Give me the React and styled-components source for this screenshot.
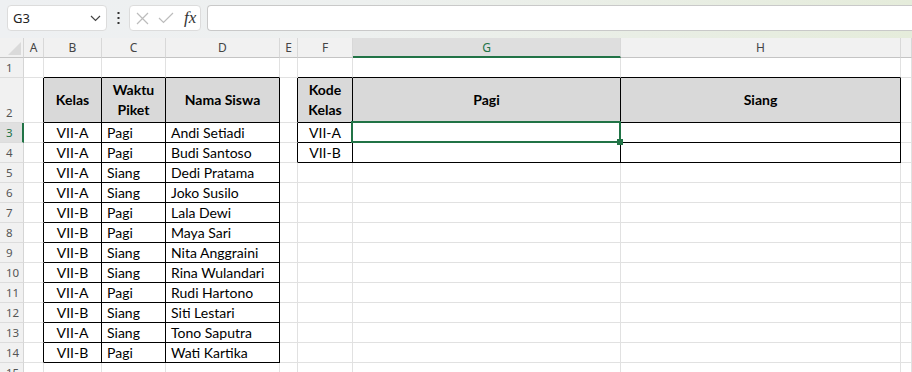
import styled, { createGlobalStyle } from "styled-components"

const GlobalStyle = createGlobalStyle`
* {
    box-sizing: border-box;
}
html, body {
    margin: 0;
    background: #fff;
    overflow: hidden;
}
body {
    font-family: "Lato", "Liberation Sans", sans-serif;
}
`

const GREEN = "#217346"
const GRID = "#e1e1e1"

// column I is only a sliver at the right edge, so its letter is off screen
const COLS = [
    { key: "A", w: 20 },
    { key: "B", w: 58 },
    { key: "C", w: 64 },
    { key: "D", w: 114 },
    { key: "E", w: 18 },
    { key: "F", w: 55 },
    { key: "G", w: 268 },
    { key: "H", w: 280 },
    { key: "I", w: 0, hidden: true },
]

const TABLES = [
    { c1: 1, c2: 3, r1: 2, r2: 14 },
    { c1: 5, c2: 7, r1: 2, r2: 4 },
]

const siswa = [
    ["VII-A", "Pagi", "Andi Setiadi"],
    ["VII-A", "Pagi", "Budi Santoso"],
    ["VII-A", "Siang", "Dedi Pratama"],
    ["VII-A", "Siang", "Joko Susilo"],
    ["VII-B", "Pagi", "Lala Dewi"],
    ["VII-B", "Pagi", "Maya Sari"],
    ["VII-B", "Siang", "Nita Anggraini"],
    ["VII-B", "Siang", "Rina Wulandari"],
    ["VII-A", "Pagi", "Rudi Hartono"],
    ["VII-B", "Siang", "Siti Lestari"],
    ["VII-A", "Siang", "Tono Saputra"],
    ["VII-B", "Pagi", "Wati Kartika"],
]

// build the cell contents
const cells = {}
const put = (r, key, text, opts = {}) => {
    cells[`${r}${key}`] = { text, ...opts }
}
const head = { bold: true, align: "center", fill: "#d9d9d9" }
put(2, "B", "Kelas", head)
put(2, "C", "Waktu Piket", head)
put(2, "D", "Nama Siswa", head)
put(2, "F", "Kode Kelas", head)
put(2, "G", "Pagi", head)
put(2, "H", "Siang", head)
siswa.forEach((s, i) => {
    put(i + 3, "B", s[0], { align: "center" })
    put(i + 3, "C", s[1])
    put(i + 3, "D", s[2])
})
put(3, "F", "VII-A", { align: "center" })
put(4, "F", "VII-B", { align: "center" })

const inTable = (r, c) => TABLES.some((t) => r >= t.r1 && r <= t.r2 && c >= t.c1 && c <= t.c2)

const ROWS = [
    { n: 1, h: 20 },
    { n: 2, h: 45 },
    ...Array.from({ length: 12 }, (_, i) => ({ n: i + 3, h: 20 })),
    { n: 15, h: 20 },
]

const Page = styled.div`
    width: 912px;
    height: 372px;
    overflow: hidden;
    display: flex;
    flex-direction: column;
`
const Toolbar = styled.div`
    flex: 0 0 38px;
    display: flex;
    align-items: flex-start;
    padding: 5px 0 0 7px;
    background: linear-gradient(90deg, #eef0f2 0%, #edf0ef 40%, #e5ecdb 100%);
    font-family: "Noto Sans", "Open Sans", sans-serif;
`
const NameBox = styled.div`
    width: 100px;
    height: 26px;
    background: #fff;
    border: 1px solid #dcdcdc;
    border-radius: 4px;
    display: flex;
    align-items: center;
    justify-content: space-between;
    padding: 0 5px 0 5px;
    font-size: 13px;
    color: #222;
`
const Dots = styled.div`
    width: 22px;
    height: 26px;
    display: flex;
    align-items: center;
    justify-content: center;
`
const FxGroup = styled.div`
    width: 72px;
    height: 26px;
    background: #fff;
    border: 1px solid #dcdcdc;
    border-radius: 4px;
    display: flex;
    align-items: center;
    padding: 0 0 0 6px;
    gap: 9px;
`
const Fx = styled.span`
    font-family: "Liberation Serif", serif;
    font-style: italic;
    font-size: 17px;
    color: #333;
    margin-left: 1px;
`
const FormulaInput = styled.div`
    flex: 1;
    height: 26px;
    margin-left: 6px;
    background: #fff;
    border: 1px solid #c9c9c9;
    border-right: none;
    border-radius: 4px 0 0 4px;
`

const HeaderRow = styled.div`
    flex: 0 0 20px;
    display: flex;
    background: #f1f1f1;
`
const Corner = styled.div`
    flex: 0 0 24px;
    border-right: 1px solid #d5d5d5;
    border-bottom: 1px solid #c4c4c4;
    display: flex;
    align-items: flex-end;
    justify-content: flex-end;
    padding: 0 2px 2px 0;
`
const ColHead = styled.div`
    flex: ${(p) => (p.$w ? `0 0 ${p.$w}px` : "1 1 auto")};
    display: flex;
    align-items: center;
    justify-content: center;
    font-family: "Noto Sans", "Open Sans", sans-serif;
    font-size: 12px;
    color: ${(p) => (p.$sel ? GREEN : "#444")};
    background: ${(p) => (p.$sel ? "#dedede" : "transparent")};
    border-right: 1px solid #d8d8d8;
    border-bottom: ${(p) => (p.$sel ? `2px solid ${GREEN}` : "1px solid #c4c4c4")};
    padding-top: ${(p) => (p.$sel ? "1px" : "0")};
`
const Row = styled.div`
    flex: 0 0 ${(p) => p.$h}px;
    display: flex;
`
const RowHead = styled.div`
    flex: 0 0 24px;
    display: flex;
    align-items: flex-end;
    padding-left: 6px;
    font-family: "Noto Sans", "Open Sans", sans-serif;
    font-size: 11.5px;
    line-height: 19px;
    color: ${(p) => (p.$sel ? GREEN : "#555")};
    background: ${(p) => (p.$sel ? "#e0e0e0" : "#f1f1f1")};
    border-right: ${(p) => (p.$sel ? `2px solid ${GREEN}` : "1px solid #d5d5d5")};
    border-bottom: 1px solid #dcdcdc;
`
const Cell = styled.div`
    position: relative;
    flex: ${(p) => (p.$w ? `0 0 ${p.$w}px` : "1 1 auto")};
    display: flex;
    align-items: center;
    justify-content: ${(p) => (p.$align === "center" ? "center" : "flex-start")};
    text-align: center;
    padding: 0 5px;
    font-size: 14px;
    font-weight: ${(p) => (p.$bold ? 700 : 400)};
    line-height: ${(p) => (p.$bold ? "20px" : "19px")};
    white-space: ${(p) => (p.$bold ? "normal" : "nowrap")};
    color: #000;
    background: ${(p) => p.$fill || "#fff"};
    border-right: 1px solid ${(p) => (p.$rb ? "#000" : GRID)};
    border-bottom: 1px solid ${(p) => (p.$bb ? "#000" : GRID)};
`
const Selection = styled.div`
    position: absolute;
    top: -2px;
    left: -2px;
    right: -1px;
    bottom: -1px;
    border: 2px solid ${GREEN};
    z-index: 2;
    pointer-events: none;
`
const FillHandle = styled.div`
    position: absolute;
    right: -4px;
    bottom: -4px;
    width: 6px;
    height: 6px;
    background: ${GREEN};
`

function Chevron() {
    return (
        <svg width="11" height="7" viewBox="0 0 11 7">
            <path d="M1 1 L5.5 5.5 L10 1" fill="none" stroke="#444" strokeWidth="1.2" />
        </svg>
    )
}

function Icons() {
    return (
        <>
            <svg width="13" height="13" viewBox="0 0 13 13">
                <path d="M1 1 L12 12 M12 1 L1 12" stroke="#bcbcbc" strokeWidth="1.2" />
            </svg>
            <svg width="16" height="12" viewBox="0 0 16 12">
                <path d="M1 6 L5.5 10.5 L15 1" fill="none" stroke="#bcbcbc" strokeWidth="1.2" />
            </svg>
            <Fx>fx</Fx>
        </>
    )
}

function App() {
    return (
        <>
            <GlobalStyle />
            <Page>
                <Toolbar>
                    <NameBox>
                        <span>G3</span>
                        <Chevron />
                    </NameBox>
                    <Dots>
                        <svg width="3" height="12" viewBox="0 0 3 12">
                            <rect x="0.5" y="0" width="2" height="2" fill="#333" />
                            <rect x="0.5" y="5" width="2" height="2" fill="#333" />
                            <rect x="0.5" y="10" width="2" height="2" fill="#333" />
                        </svg>
                    </Dots>
                    <FxGroup>
                        <Icons />
                    </FxGroup>
                    <FormulaInput />
                </Toolbar>

                <HeaderRow>
                    <Corner>
                        <svg width="13" height="13" viewBox="0 0 13 13">
                            <polygon points="13,0 13,13 0,13" fill="#dadada" />
                        </svg>
                    </Corner>
                    {COLS.map((c) => (
                        <ColHead key={c.key} $w={c.w} $sel={c.key === "G"}>
                            {c.hidden ? "" : c.key}
                        </ColHead>
                    ))}
                </HeaderRow>

                {ROWS.map((row) => (
                    <Row key={row.n} $h={row.h}>
                        <RowHead $sel={row.n === 3}>{row.n}</RowHead>
                        {COLS.map((c, ci) => {
                            const cell = cells[`${row.n}${c.key}`] || {}
                            const rb = inTable(row.n, ci) || inTable(row.n, ci + 1)
                            const bb = inTable(row.n, ci) || inTable(row.n + 1, ci)
                            return (
                                <Cell
                                    key={c.key}
                                    $w={c.w}
                                    $rb={rb}
                                    $bb={bb}
                                    $bold={cell.bold}
                                    $align={cell.align}
                                    $fill={cell.fill}
                                >
                                    {cell.text}
                                    {row.n === 3 && c.key === "G" && (
                                        <Selection>
                                            <FillHandle />
                                        </Selection>
                                    )}
                                </Cell>
                            )
                        })}
                    </Row>
                ))}
            </Page>
        </>
    )
}

export default App
